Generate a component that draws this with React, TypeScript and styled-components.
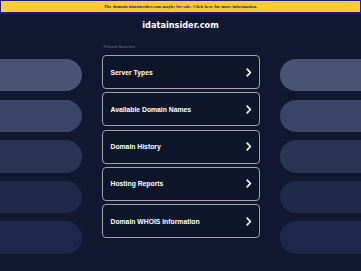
import React from "react";
import styled, { createGlobalStyle } from "styled-components";

const GlobalStyle = createGlobalStyle`
  html, body {
    margin: 0;
    padding: 0;
    background: #111830;
    overflow: hidden;
  }
`;

const searches = [
  "Server Types",
  "Available Domain Names",
  "Domain History",
  "Hosting Reports",
  "Domain WHOIS Information",
];

const pillShades = ["#4b5472", "#3c4566", "#2c3453", "#222a4a", "#1e2747"];

const Chevron = () => (
  <svg width="6" height="9" viewBox="0 0 6 9">
    <path
      d="M1.2 1.2 L4.4 4.5 L1.2 7.8"
      fill="none"
      stroke="#fff"
      strokeWidth="1.7"
      strokeLinecap="round"
      strokeLinejoin="round"
    />
  </svg>
);

const App = () => {
  return (
    <Page>
      <GlobalStyle />
      <Banner>
        <BannerText>
          The domain idatainsider.com maybe for sale. Click here for more
          information.
        </BannerText>
      </Banner>
      <Title>idatainsider.com</Title>
      <Content>
        <Side>
          {pillShades.map((c) => (
            <Pill key={c} $shade={c} />
          ))}
        </Side>
        <Center>
          <Label>Related Searches</Label>
          <Cards>
            {searches.map((s) => (
              <Card key={s}>
                <CardText>{s}</CardText>
                <Chevron />
              </Card>
            ))}
          </Cards>
        </Center>
        <Side>
          {pillShades.map((c) => (
            <Pill key={c} $shade={c} />
          ))}
        </Side>
      </Content>
    </Page>
  );
};

export default App;

const Page = styled.div`
  width: 361px;
  height: 271px;
  overflow: hidden;
  background: #111830;
`;

const Banner = styled.div`
  height: 11px;
  background: #fdca38;
  border: 1px solid #1d1f70;
  border-bottom-width: 2px;
  display: flex;
  justify-content: center;
  align-items: center;
`;

const BannerText = styled.div`
  font-family: "Liberation Serif", serif;
  font-weight: 700;
  font-size: 4.6px;
  color: #262a6e;
  white-space: nowrap;
`;

const Title = styled.div`
  height: 22px;
  line-height: 22px;
  text-align: center;
  font-family: "DejaVu Sans", sans-serif;
  font-weight: 700;
  font-size: 8.2px;
  color: #ffffff;
`;

const Content = styled.div`
  display: flex;
  justify-content: center;
  gap: 20px;
  width: 518px;
  margin-left: -78.5px;
`;

const Side = styled.div`
  width: 160px;
  flex-shrink: 0;
  margin-top: 23px;
  display: flex;
  flex-direction: column;
  gap: 8.2px;
`;

const Pill = styled.div<{ $shade: string }>`
  height: 32.4px;
  border-radius: 16px;
  background: ${(p) => p.$shade};
`;

const Center = styled.div`
  width: 158px;
  flex-shrink: 0;
`;

const Label = styled.div`
  margin-top: 6px;
  margin-bottom: 3px;
  padding-left: 2px;
  height: 10px;
  line-height: 10px;
  font-family: "Liberation Sans", sans-serif;
  font-size: 4px;
  color: #6b7088;
`;

const Cards = styled.div`
  display: flex;
  flex-direction: column;
  gap: 3.3px;
`;

const Card = styled.div`
  box-sizing: border-box;
  height: 34px;
  padding: 0 7px 0 8px;
  border: 1.5px solid #a3a4ab;
  border-radius: 4px;
  background: #101629;
  display: flex;
  align-items: center;
  justify-content: space-between;
`;

const CardText = styled.div`
  font-family: "Liberation Sans", sans-serif;
  font-weight: 700;
  font-size: 6.8px;
  color: #ffffff;
`;
